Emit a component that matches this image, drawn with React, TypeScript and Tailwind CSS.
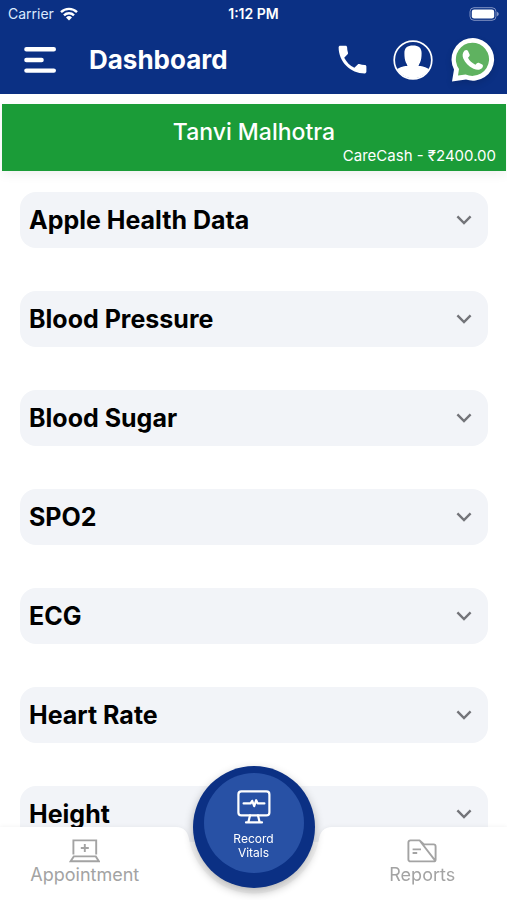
import { useState } from "react";

const sections = [
  "Apple Health Data",
  "Blood Pressure",
  "Blood Sugar",
  "SPO2",
  "ECG",
  "Heart Rate",
  "Height",
];

const phonePath =
  "M6.62 10.79c1.44 2.83 3.76 5.14 6.59 6.59l2.2-2.2c.27-.27.67-.36 1.02-.24 1.12.37 2.33.57 3.57.57.55 0 1 .45 1 1V20c0 .55-.45 1-1 1C10.61 21 3 13.39 3 4c0-.55.45-1 1-1h3.5c.55 0 1 .45 1 1 0 1.25.2 2.45.57 3.57.11.35.03.74-.25 1.02l-2.2 2.2z";

function StatusBar() {
  return (
    <div className="grid grid-cols-3 items-center h-7 px-2 text-sm text-white">
      <div className="flex items-center gap-1.5 text-blue-100">
        <span>Carrier</span>
        <svg width="18" height="14" viewBox="0 0 18 14" fill="none" stroke="#fff" strokeWidth="2.4" aria-hidden="true">
          <path d="M1 5.2a11.4 11.4 0 0 1 16 0" />
          <path d="M4 8.3a7.1 7.1 0 0 1 10 0" />
          <path d="M9 13.5 6 10.5a4.3 4.3 0 0 1 6 0Z" fill="#fff" stroke="none" />
        </svg>
      </div>
      <span className="text-center font-semibold">1:12 PM</span>
      <svg className="justify-self-end" width="31" height="14" viewBox="0 0 31 14" aria-hidden="true">
        <rect x="2" y=".7" width="26" height="12.6" rx="4" fill="none" stroke="#8193c4" strokeWidth="1" />
        <rect x="3.8" y="2.4" width="22.4" height="9.2" rx="2.4" fill="#fff" />
        <path d="M29 4.8c2.3.8 2.3 3.6 0 4.4Z" fill="#8193c4" />
      </svg>
    </div>
  );
}

function Header() {
  return (
    <header className="bg-[#0b3084]">
      <StatusBar />
      <div className="flex items-center h-[66px] pl-6 pr-3 pb-[3px]">
        <button type="button" aria-label="Menu" className="mr-8">
          <svg width="33" height="28" viewBox="0 0 33 28" stroke="#fff" strokeWidth="4.4" strokeLinecap="round">
            <path d="M2.4 3.2h27.4M2.4 14h15.2M2.4 24.6h27.4" />
          </svg>
        </button>
        <h1 className="text-[26px] leading-8 font-bold text-white">Dashboard</h1>
        <div className="flex items-center ml-auto">
          <button type="button" aria-label="Call" className="mr-[22px]">
            <svg width="37" height="37" viewBox="0 0 24 24" fill="#fff">
              <path d={phonePath} />
            </svg>
          </button>
          <button type="button" aria-label="Profile" className="mr-[18px]">
            <svg width="40" height="40" viewBox="0 0 40 40">
              <defs>
                <clipPath id="avatar">
                  <circle cx="20" cy="20" r="18.5" />
                </clipPath>
              </defs>
              <circle cx="20" cy="20" r="18.8" fill="none" stroke="#fff" strokeWidth="1.7" />
              <path
                clipPath="url(#avatar)"
                fill="#fff"
                d="M20 5.6c5.6 0 8.6 2.4 8.6 7.4 0 4.2-.4 7.4-1.6 9.8-.6 1.2-1.4 2.2-1.4 3.2 4.4.2 9.4 1.4 12.4 5.200V40H2v-8.800c3-3.800 8-5 12.400-5.200 0-1-.8-2-1.400-3.200-1.200-2.400-1.600-5.600-1.600-9.800 0-5 3-7.400 8.600-7.400Z"
              />
            </svg>
          </button>
          <button type="button" aria-label="WhatsApp" className="drop-shadow-md">
            <svg width="44" height="44" viewBox="0 0 44 44">
              <path d="M1 43.4 3 31.4A21.3 21.3 0 1 1 15 41.6Z" fill="#fff" />
              <path d="M7 37.6 8 31A16.6 16.6 0 1 1 14.6 36.4Z" fill="#5fb260" />
              <path
                d="M13.600 12.6c1-1 2.8-.9 3.4.3l1.6 3.6c.4 1-.2 1.9-1.600 3.3 1.5 3 4 5.4 7.4 6.9 1.5-1.7 2.3-2.4 3.3-1.9l3.6 1.8c1 .6.9 2.4-.2 3.5-2 2.1-5 2.3-8.600.7-5-2.3-8.400-6-10.2-10.2-1.200-3-.8-6 1.300-8Z"
                fill="#fff"
              />
            </svg>
          </button>
        </div>
      </div>
    </header>
  );
}

function SectionRow({ title }: { title: string }) {
  const [open, setOpen] = useState(false);

  return (
    <button
      type="button"
      aria-expanded={open}
      onClick={() => setOpen(!open)}
      className="flex items-center justify-between w-full h-14 pl-[9px] pr-4 rounded-2xl bg-[#f2f4f8] text-left"
    >
      <span className="text-[25px] leading-8 font-bold text-black">{title}</span>
      <svg
        className={open ? "rotate-180" : ""}
        width="16"
        height="10"
        viewBox="0 0 16 10"
        fill="none"
        stroke="#737479"
        strokeWidth="2.4"
      >
        <path d="m1.4 1.4 6.6 6.6 6.6-6.6" />
      </svg>
    </button>
  );
}

function BottomNav() {
  return (
    <nav className="fixed inset-x-0 bottom-0 text-lg text-[#a3a3a3]">
      <div className="flex h-[73px] drop-shadow-[0_0_2px_rgba(0,0,0,0.06)]">
        <a href="#appointment" className="flex flex-1 flex-col items-center pt-3 bg-white">
          <svg width="31" height="24" viewBox="0 0 31 24" fill="none" stroke="#a3a3a3" strokeWidth="1.9">
            <path d="M4.4 15.6V1.4h22.8V15.6M4.8 17.4h22l3 4.8H1.6ZM15.8 5v8M11.8 9h8" />
          </svg>
          <span className="leading-6">Appointment</span>
        </a>
        <svg width="168" height="73" viewBox="0 0 168 73" fill="#fff" aria-hidden="true">
          <path d="M0 0h6c8 0 12 5 13 12a66 66 0 0 0 130 0c1-7 5-12 13-12h6v73H0Z" />
        </svg>
        <a href="#reports" className="flex flex-1 flex-col items-center pt-3 bg-white">
          <svg width="30" height="24" viewBox="0 0 30 24" fill="none" stroke="#a3a3a3" strokeWidth="1.9" strokeLinejoin="round">
            <path d="M3.4 1.4h9.2l4.4 4h9.6a2 2 0 0 1 2 2v13a2 2 0 0 1-2 2H3.4a2 2 0 0 1-2-2v-17a2 2 0 0 1 2-2ZM13 2l15.2 19.6M5.6 10.4H14M5.6 14h4.6" />
          </svg>
          <span className="leading-6">Reports</span>
        </a>
      </div>
      <button
        type="button"
        className="absolute left-1/2 bottom-3 -translate-x-1/2 size-[122px] pb-2 flex items-center justify-center rounded-full bg-[#0b3084] shadow-[0_4px_10px_rgba(0,0,0,0.3)]"
      >
        <span className="flex flex-col items-center justify-center size-[100px] pt-1 rounded-full bg-[#2851a5] text-xs leading-[14px] text-white">
          <svg className="mb-2" width="34" height="34" viewBox="0 0 34 34" fill="none" stroke="#fff" strokeWidth="2.2" strokeLinecap="round" strokeLinejoin="round">
            <rect x="1.4" y="1.4" width="31" height="24" rx="3" />
            <path d="M13 25.4 11.4 32M21 25.4 22.6 32M9 32.4h16" />
            <path d="M6.6 13.4h7l1.6-2.6 2 5.4 2-6 1.4 3.2h6.8" />
          </svg>
          <span>Record</span>
          <span>Vitals</span>
        </span>
      </button>
    </nav>
  );
}

export default function App() {
  return (
    <div className="min-h-screen bg-white font-['Inter',sans-serif]">
      <Header />
      <section className="mt-2.5 ml-0.5 mr-px h-[67px] pt-3.5 bg-[#1b9c38] text-white shadow-[0_4px_10px_rgba(0,0,0,0.06)]">
        <h2 className="text-[23px] leading-7 font-medium text-center">Tanvi Malhotra</h2>
        <p className="pr-2.5 text-[15px] leading-5 text-right">CareCash - ₹2400.00</p>
      </section>
      <main className="flex flex-col gap-[43px] pt-[21px] pl-5 pr-[19px] pb-8">
        {sections.map((title) => (
          <SectionRow key={title} title={title} />
        ))}
      </main>
      <BottomNav />
    </div>
  );
}
